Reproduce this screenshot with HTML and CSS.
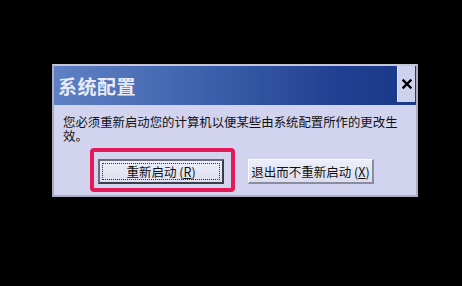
FILE: index.html
```html
<!DOCTYPE html>
<html lang="zh-CN">
<head>
<meta charset="utf-8">
<link rel="stylesheet" href="styles.css">
</head>
<body>
<div class="screen">
  <div class="dialog">
    <div class="titlebar">
      <div class="title">系统配置</div>
      <div class="close">
        <svg width="10" height="10" viewBox="0 0 10 10"><path d="M1.5 1.5 L8.5 8.5 M8.5 1.5 L1.5 8.5" stroke="#000" stroke-width="2.4" stroke-linecap="square"/></svg>
      </div>
    </div>
    <div class="body">
      <p class="msg">您必须重新启动您的计算机以便某些由系统配置所作的更改生<br>效。</p>
      <div class="buttons">
        <div class="highlight">
          <div class="btn btn-default"><span class="focus">重新启动 (<u>R</u>)</span></div>
        </div>
        <div class="btn btn-normal">退出而不重新启动 (<u>X</u>)</div>
      </div>
    </div>
  </div>
</div>
</body>
</html>
```
FILE: styles.css
```css
html, body {
  margin: 0;
  padding: 0;
  background: #000;
  width: 462px;
  height: 286px;
  overflow: hidden;
}
.screen {
  padding: 64px 0 0 52px;
}
.dialog {
  width: 362px;
  height: 129px;
  border: 2px solid #a9acc2;
  border-top-color: #c4c6d8;
  background: #d2d3ee;
  font-family: "Noto Sans CJK SC", "Noto Sans", sans-serif;
}
.titlebar {
  display: flex;
  height: 39px;
  background: linear-gradient(90deg, #5f80c4 0%, #3e63ad 40%, #1f3f90 80%, #1a3888 100%);
}
.title {
  flex: 1;
  color: #e8ebf6;
  font-weight: bold;
  font-size: 19px;
  letter-spacing: 0.5px;
  line-height: 39px;
  padding-left: 4px;
}
.close {
  width: 17px;
  margin: 0 1px 3px 0;
  background: #cfd2ec;
  border-left: 1px solid #e4e6f6;
  display: flex;
  align-items: center;
  justify-content: center;
}
.body {
  padding: 10px 0 0 9px;
}
.msg {
  margin: 0;
  font-size: 12.4px;
  line-height: 14px;
  letter-spacing: 0;
  color: #111;
  white-space: nowrap;
}
.buttons {
  display: flex;
  align-items: flex-start;
  margin-top: 5px;
  padding-left: 27px;
}
.highlight {
  border: 4px solid #e41a58;
  border-radius: 4px;
  padding: 7px 7px 4px 4px;
}
.btn {
  box-sizing: border-box;
  width: 126px;
  height: 25px;
  font-size: 12.5px;
  color: #111;
  white-space: nowrap;
  display: flex;
  align-items: center;
  justify-content: center;
  background: linear-gradient(180deg, #eceef8 0%, #dcdeee 100%);
}
.btn-default {
  border: 2px solid #3a3c4c;
  border-top-color: #6a6c7c;
  border-left-color: #6a6c7c;
  padding: 2px;
}
.focus {
  flex: 1;
  align-self: stretch;
  display: flex;
  align-items: center;
  justify-content: center;
  border: 1px dotted #333;
}
.btn-normal {
  margin: 11px 0 0 13px;
  border: 1px solid #fafaff;
  border-right: 2px solid #8a8ca0;
  border-bottom: 2px solid #8a8ca0;
}
u {
  text-decoration: underline;
}
```
